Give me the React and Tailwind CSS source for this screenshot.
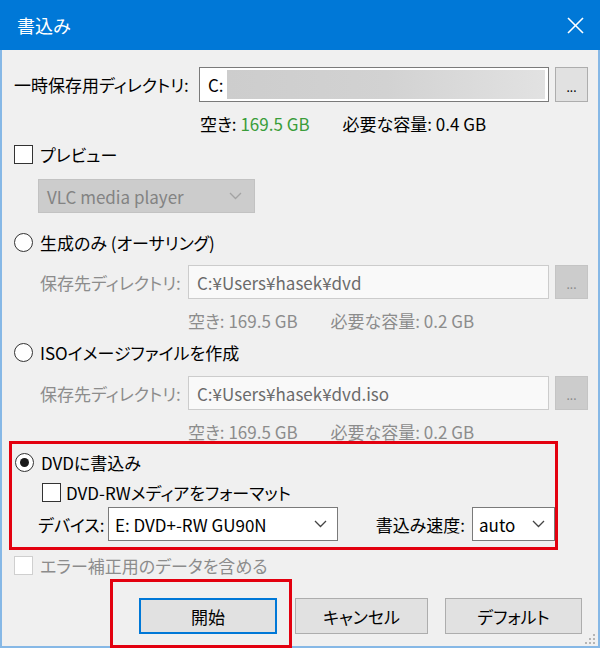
import React from 'react';

const baseFont = "font-['Noto_Sans_CJK_JP','Noto_Sans',sans-serif] [font-feature-settings:'palt']";

function Chevron({ color = '#444' }) {
  return (
    <svg width="13" height="8" viewBox="0 0 13 8">
      <polyline points="1,1 6.5,6.5 12,1" fill="none" stroke={color} strokeWidth="1.3" />
    </svg>
  );
}

function Checkbox({ disabled }) {
  return (
    <span
      className={`w-[19px] h-[19px] shrink-0 bg-white border-[1.5px] ${
        disabled ? 'border-[#cfcfcf]' : 'border-[#333333]'
      }`}
    />
  );
}

function Radio({ checked }) {
  return (
    <span className="w-[19px] h-[19px] shrink-0 rounded-full bg-white border-[1.5px] border-[#333333] flex items-center justify-center">
      {checked && <span className="w-[9px] h-[9px] rounded-full bg-[#1a1a1a]" />}
    </span>
  );
}

function FreeSpace({ need, left, green }) {
  return (
    <div className={`h-[20px] flex items-center leading-none ${left} ${green ? 'text-black' : 'text-[#8c8c8c]'}`}>
      <span>
        空き: <span className={green ? 'text-[#3a9d3a]' : ''}>169.5 GB</span>
      </span>
      <span className="ml-[33px]">必要な容量: {need}</span>
    </div>
  );
}

function PathRow({ value }) {
  return (
    <div className="h-[34px] flex items-center">
      <span className="ml-[26px] w-[148px] shrink-0 text-[#8c8c8c] leading-none">保存先ディレクトリ:</span>
      <div className="w-[361px] h-full border border-[#cccccc] bg-[#f9f9f9] flex items-center pl-[8px] text-[#6b6b6b] leading-none">
        {value}
      </div>
      <div className="ml-[6px] w-[33px] h-full border border-[#c4c4c4] bg-[#cccccc] flex items-center justify-center text-[12px] text-[#8a8a8a] pt-[4px]">
        ...
      </div>
    </div>
  );
}

export default function App() {
  return (
    <div className={`w-[600px] h-[648px] flex flex-col bg-[#f0f0f0] text-[17px] text-black whitespace-nowrap ${baseFont}`}>
      {/* title bar */}
      <div className="h-[50px] shrink-0 bg-[#0078d7] flex items-center justify-between pl-[17px] pr-[16px] text-white">
        <span className="leading-none text-[18px]">書込み</span>
        <svg width="17" height="17" viewBox="0 0 17 17">
          <line x1="1" y1="1" x2="16" y2="16" stroke="#fff" strokeWidth="1.6" />
          <line x1="16" y1="1" x2="1" y2="16" stroke="#fff" strokeWidth="1.6" />
        </svg>
      </div>

      <div className="relative flex-1 border-x-2 border-b-2 border-[#86b8e6] pl-[12px] pr-[8px] flex flex-col">
        {/* temp dir */}
        <div className="mt-[17px] h-[35px] flex items-center">
          <span className="w-[185px] shrink-0 leading-none">一時保存用ディレクトリ:</span>
          <div className="w-[350px] h-full border border-[#7a7a7a] bg-white flex items-center pl-[8px] leading-none">
            <span>C:</span>
            <div className="flex-1 self-stretch my-[2px] mr-[3px] ml-[3px] bg-gradient-to-r from-[#cdcdcd] via-[#d2d2d2] to-[#e2e2e2]" />
          </div>
          <div className="ml-[6px] w-[33px] h-full border border-[#adadad] bg-[#e1e1e1] flex items-center justify-center text-[12px] pt-[4px]">
            ...
          </div>
        </div>
        <div className="mt-[11px]">
          <FreeSpace need="0.4 GB" left="pl-[186px]" green />
        </div>

        {/* preview */}
        <div className="mt-[11px] h-[20px] flex items-center gap-[7px] leading-none">
          <Checkbox />
          <span>プレビュー</span>
        </div>
        <div className="mt-[15px] ml-[24px] w-[217px] h-[34px] bg-[#cccccc] border border-[#c2c2c2] flex items-center justify-between pl-[8px] pr-[12px] text-[#838383] leading-none">
          <span>VLC media player</span>
          <Chevron color="#a3a3a3" />
        </div>

        {/* authoring */}
        <div className="mt-[19px] h-[20px] flex items-center gap-[7px] leading-none">
          <Radio />
          <span>生成のみ (オーサリング)</span>
        </div>
        <div className="mt-[13px]">
          <PathRow value="C:¥Users¥hasek¥dvd" />
        </div>
        <div className="mt-[11px]">
          <FreeSpace need="0.2 GB" left="pl-[174px]" />
        </div>

        {/* iso */}
        <div className="mt-[12px] h-[20px] flex items-center gap-[7px] leading-none">
          <Radio />
          <span>ISOイメージファイルを作成</span>
        </div>
        <div className="mt-[14px]">
          <PathRow value="C:¥Users¥hasek¥dvd.iso" />
        </div>
        <div className="mt-[11px]">
          <FreeSpace need="0.2 GB" left="pl-[174px]" />
        </div>

        {/* burn to dvd (highlighted) */}
        <div className="-ml-[5px] w-[549px] h-[109px] border-[3px] border-[#e3000f] flex flex-col pl-[3px]">
          <div className="mt-[8px] h-[20px] flex items-center gap-[7px] leading-none">
            <Radio checked />
            <span>DVDに書込み</span>
          </div>
          <div className="mt-[10px] ml-[27px] h-[20px] flex items-center gap-[5px] leading-none">
            <Checkbox />
            <span>DVD-RWメディアをフォーマット</span>
          </div>
          <div className="mt-[5px] h-[34px] flex items-center leading-none">
            <span className="ml-[23px] w-[70px] shrink-0">デバイス:</span>
            <div className="w-[230px] h-full border border-[#7a7a7a] bg-white flex items-center justify-between pl-[6px] pr-[10px]">
              <span>E: DVD+-RW GU90N</span>
              <Chevron />
            </div>
            <span className="ml-auto">書込み速度:</span>
            <div className="ml-[7px] w-[83px] h-full border border-[#7a7a7a] bg-white flex items-center justify-between pl-[6px] pr-[9px]">
              <span>auto</span>
              <Chevron />
            </div>
          </div>
        </div>

        {/* ecc */}
        <div className="mt-[5px] h-[20px] flex items-center gap-[7px] leading-none text-[#8c8c8c]">
          <Checkbox disabled />
          <span>エラー補正用のデータを含める</span>
        </div>

        {/* buttons */}
        <div className="relative mt-[23px] h-[36px] flex items-stretch leading-none">
          <div className="ml-[125px] w-[138px] border-2 border-[#0078d7] bg-[#e1e1e1] flex items-center justify-center">
            開始
          </div>
          <div className="ml-[18px] w-[133px] border border-[#adadad] bg-[#e1e1e1] flex items-center justify-center">
            キャンセル
          </div>
          <div className="ml-[17px] w-[137px] border border-[#adadad] bg-[#e1e1e1] flex items-center justify-center">
            デフォルト
          </div>
          <div className="absolute left-[96px] top-[-19px] w-[182px] h-[69px] border-[3px] border-[#e3000f]" />
        </div>

        {/* resize grip */}
        <svg className="absolute right-[2px] bottom-[1px]" width="11" height="11" viewBox="0 0 11 11">
          <rect x="8" y="0" width="2" height="2" fill="#b5b5b5" />
          <rect x="4" y="4" width="2" height="2" fill="#b5b5b5" />
          <rect x="8" y="4" width="2" height="2" fill="#b5b5b5" />
          <rect x="0" y="8" width="2" height="2" fill="#b5b5b5" />
          <rect x="4" y="8" width="2" height="2" fill="#b5b5b5" />
          <rect x="8" y="8" width="2" height="2" fill="#b5b5b5" />
        </svg>
      </div>
    </div>
  );
}
